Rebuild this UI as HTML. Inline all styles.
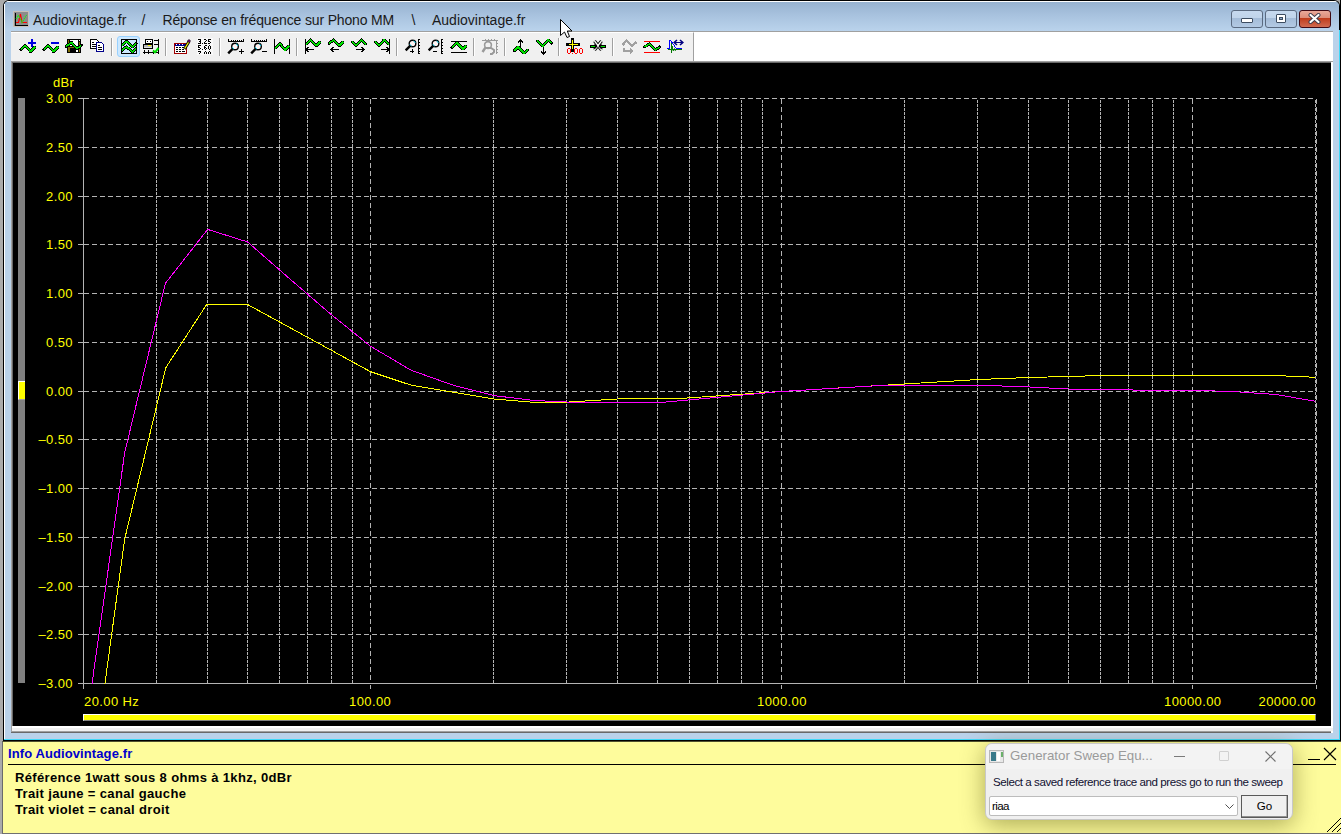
<!DOCTYPE html>
<html><head><meta charset="utf-8">
<style>
*{margin:0;padding:0;box-sizing:border-box}
html,body{width:1341px;height:834px;overflow:hidden;background:#ababab;font-family:"Liberation Sans",sans-serif}
.abs{position:absolute}
#win{position:absolute;left:3px;top:0;width:1337px;height:741px;background:#bad2ea;border:1px solid #000;border-bottom:none;border-radius:6px 6px 0 0}
#title{position:absolute;left:4px;top:1px;width:1335px;height:30px;background:linear-gradient(#fdfdfd 0,#fdfdfd 1px,#97b2d0 1px,#a9c3df 50%,#bad3ec 100%);border-radius:5px 5px 0 0}
.tt{position:absolute;top:12px;font-size:14px;line-height:16px;color:#1a1a1a;white-space:pre}
.tb{position:absolute;top:10px;height:18px;border:1px solid #5a6a80;border-radius:3px;background:linear-gradient(#c6d9ee 0,#c0d4ea 45%,#a4bcd8 46%,#b3c9e3 100%)}
#tbar{position:absolute;left:11px;top:31px;width:1322px;height:30px;background:#fff;border-top:1px solid #a0a0a0}
#tool{position:absolute;left:11px;top:32px;width:683px;height:29px;background:#f0f0f0;border-right:1px solid #a0a0a0;border-top:1px solid #fff}
.sep{position:absolute;top:38px;width:2px;height:18px;background:#a0a0a0;border-right:1px solid #fff}
.ic{position:absolute;top:39px;overflow:visible}
#chart{position:absolute;left:11px;top:61px;width:1322px;height:671px;border-top:1px solid #a0a0a0;border-left:1px solid #a0a0a0;border-right:0;}
#black{position:absolute;left:13px;top:63px;width:1318px;height:663px;background:#000}
.yl{position:absolute;left:20px;width:53px;text-align:right;color:#ffff00;font-size:13px;line-height:16px;letter-spacing:0.4px}
.xl{position:absolute;top:694px;color:#ffff00;font-size:13px;line-height:16px;letter-spacing:0.4px;white-space:nowrap}
#info{position:absolute;left:2px;top:741px;width:1339px;height:93px;background:#fefc9c;border-left:1px solid #6a6a6a;border-top:1px solid #505030}
#infot{position:absolute;left:8px;top:746px;font-size:13px;font-weight:bold;color:#0000cc;letter-spacing:0.1px}
.il{position:absolute;left:15px;font-size:13px;font-weight:bold;color:#000;letter-spacing:0.35px;white-space:nowrap}
#dlg{position:absolute;left:985px;top:743px;width:308px;height:77px;background:#f0f0f0;border:1px solid #c8c8c8;border-radius:7px;box-shadow:0 5px 24px rgba(70,70,0,0.45)}
</style></head><body>
<div id="win"></div>
<div id="title"></div>
<div class="abs" style="left:4px;top:4px;width:1px;height:735px;background:#fff"></div>
<svg class="abs" style="left:13px;top:11px" width="16" height="16" viewBox="0 0 16 16"><rect x="0.5" y="0.5" width="15" height="15" fill="#8c8c8c" stroke="#c8c0b8"/><path d="M2.5 2v12.5h12" stroke="#000" stroke-width="1.2" fill="none" shape-rendering="crispEdges"/><path d="M3 11.5h2.5L7.5 3 9 11.5h5" stroke="#ff0000" stroke-width="1.1" fill="none"/><path d="M3 8L5 4.5 6.5 6 9 11.5 13.5 4" stroke="#00ff00" stroke-width="1.1" stroke-dasharray="1.2 0.8" fill="none"/></svg>
<div class="tt" style="left:33px">Audiovintage.fr</div><div class="tt" style="left:141.5px">/</div><div class="tt" style="left:162.5px;letter-spacing:-0.15px">Réponse en fréquence sur Phono MM</div><div class="tt" style="left:411.5px">\</div><div class="tt" style="left:432px">Audiovintage.fr</div>
<div class="tb" style="left:1231px;width:32px"><div style="position:absolute;left:9px;top:7px;width:12px;height:5px;background:#fff;border:1px solid #3c4c60;border-radius:1px"></div></div>
<div class="tb" style="left:1265px;width:32px"><div style="position:absolute;left:10px;top:3px;width:10px;height:9px;background:#fff;border:1px solid #3c4c60;border-radius:1px"><div style="position:absolute;left:2px;top:2px;width:4px;height:3px;background:#8ea8c8;border:1px solid #3c4c60"></div></div></div>
<div class="tb" style="left:1299px;width:32px;border-color:#3f0a14;background:linear-gradient(#e9a99a 0,#dd8c78 45%,#c03c1c 46%,#d06a50 100%)"><svg style="position:absolute;left:8px;top:2px" width="14" height="12" viewBox="0 0 14 12"><path d="M2.5 2l8 7M10.5 2l-8 7" stroke="#3a3a4a" stroke-width="4" stroke-linecap="round"/><path d="M2.5 2l8 7M10.5 2l-8 7" stroke="#fff" stroke-width="2.2" stroke-linecap="round"/></svg></div>
<div id="tbar"></div>
<div id="tool"></div>
<div class="abs" style="left:117px;top:36px;width:23px;height:21px;background:#cce8ff;border:1px solid #99d1ff;border-radius:3px"></div>
<div class="sep" style="left:111px"></div><div class="sep" style="left:165px"></div><div class="sep" style="left:219px"></div><div class="sep" style="left:296px"></div><div class="sep" style="left:396px"></div><div class="sep" style="left:473px"></div><div class="sep" style="left:504px"></div><div class="sep" style="left:558px"></div><div class="sep" style="left:612px"></div>
<svg class="ic" style="left:20px" width="18" height="18" viewBox="0 0 18 18" shape-rendering="crispEdges"><polyline points="1,10.5 5,6.5 10.5,12.5 15,8" fill="none" stroke="#000" stroke-width="2.9" stroke-linejoin="round" stroke-linecap="round"/><polyline points="1,10.5 5,6.5 10.5,12.5 15,8" fill="none" stroke="#00e000" stroke-width="1.5" stroke-linejoin="round" stroke-linecap="butt"/><path d="M8 3.5h8M12 0v8" stroke="#0000e0" stroke-width="2"/></svg>
<svg class="ic" style="left:43px" width="18" height="18" viewBox="0 0 18 18" shape-rendering="crispEdges"><polyline points="1,10.5 5,6.5 10.5,12.5 15,8" fill="none" stroke="#000" stroke-width="2.9" stroke-linejoin="round" stroke-linecap="round"/><polyline points="1,10.5 5,6.5 10.5,12.5 15,8" fill="none" stroke="#00e000" stroke-width="1.5" stroke-linejoin="round" stroke-linecap="butt"/><path d="M8 3.5h8" stroke="#0000e0" stroke-width="2"/></svg>
<svg class="ic" style="left:66px" width="18" height="18" viewBox="0 0 18 18" shape-rendering="crispEdges"><rect x="1.5" y="0.5" width="13" height="13" fill="#000" stroke="#000"/><rect x="4" y="1" width="8" height="6" fill="#fff"/><rect x="2" y="1" width="1" height="4" fill="#7d6e00"/><rect x="13" y="3" width="1" height="3" fill="#7d6e00"/><rect x="13" y="1" width="1" height="1" fill="#fff"/><rect x="2" y="9" width="2" height="4" fill="#7d6e00"/><rect x="2" y="8" width="6" height="1" fill="#7d6e00"/><rect x="13" y="10" width="1" height="3" fill="#7d6e00"/><rect x="10" y="11" width="2" height="2" fill="#fff"/><polyline points="0,7.5 5.5,3.5 11,9.5 15.5,6.5" fill="none" stroke="#000" stroke-width="2.9" stroke-linejoin="round" stroke-linecap="round"/><polyline points="0,7.5 5.5,3.5 11,9.5 15.5,6.5" fill="none" stroke="#00e000" stroke-width="1.5" stroke-linejoin="round" stroke-linecap="butt"/></svg>
<svg class="ic" style="left:90px" width="18" height="18" viewBox="0 0 18 18" shape-rendering="crispEdges"><path d="M0.5 0.5h6l2 2v7h-8z" fill="#fff" stroke="#000"/><path d="M2 3.5h2M2 5.5h4M2 7.5h4" stroke="#000"/><path d="M6.5 3.5h5l2 2v7h-7z" fill="#fff" stroke="#00008b" stroke-width="1.2"/><path d="M8 6.5h2M8 8.5h4M8 10.5h4" stroke="#000"/></svg>
<svg class="ic" style="left:120px" width="18" height="18" viewBox="0 0 18 18" shape-rendering="crispEdges"><rect x="1.5" y="0.5" width="15" height="14" fill="#cce8ff" stroke="#000" stroke-width="1.3"/><polyline points="2,6 6.5,2.5 12.3,8 16,4.5" fill="none" stroke="#000" stroke-width="2.9" stroke-linejoin="round" stroke-linecap="round"/><polyline points="2,6 6.5,2.5 12.3,8 16,4.5" fill="none" stroke="#00e000" stroke-width="1.5" stroke-linejoin="round" stroke-linecap="butt"/><polyline points="2,11.2 6.5,7.7 12.3,12.8 16,9.5" fill="none" stroke="#000" stroke-width="2.9" stroke-linejoin="round" stroke-linecap="round"/><polyline points="2,11.2 6.5,7.7 12.3,12.8 16,9.5" fill="none" stroke="#00e000" stroke-width="1.5" stroke-linejoin="round" stroke-linecap="butt"/></svg>
<svg class="ic" style="left:143px" width="18" height="18" viewBox="0 0 18 18" shape-rendering="crispEdges"><rect x="2.5" y="0.5" width="7" height="4" rx="1" fill="#fff" stroke="#000"/><path d="M4 2.5h1M7 2.5h1" stroke="#000"/><rect x="0.5" y="5.5" width="9" height="4" rx="1" fill="#b8b8b8" stroke="#000"/><rect x="1" y="8" width="8" height="1" fill="#e0e0e0"/><rect x="5" y="6" width="3" height="1" fill="#ffff00"/><path d="M11 1.5h4M11 5.5h4M15.5 0v15M0 13.5h16M1.5 11v4M5.5 11v4M10.5 11v4" stroke="#000"/><path shape-rendering="auto" d="M10 11.5l2 1.8 3.5-4.3" stroke="#00e000" stroke-width="2" fill="none"/></svg>
<svg class="ic" style="left:174px" width="18" height="18" viewBox="0 0 18 18" shape-rendering="crispEdges"><rect x="0.5" y="4.5" width="12" height="10" fill="#fff" stroke="#a00000"/><rect x="1" y="5" width="11" height="2" fill="#000090"/><path d="M2 5.5h1M5 5.5h1M8 5.5h1" stroke="#fff"/><path d="M2 8.5h2M5 8.5h2M8 8.5h2M2 10.5h2M5 10.5h2M8 10.5h2M2 12.5h2M5 12.5h2M8 12.5h3" stroke="#000"/><path shape-rendering="auto" d="M10.5 10L15 2.5" stroke="#000" stroke-width="3"/><path shape-rendering="auto" d="M10.7 9.5L15 2.5" stroke="#ffff00" stroke-width="1.2"/><circle shape-rendering="auto" cx="15" cy="2" r="1.3" fill="#900090" stroke="#000" stroke-width="0.6"/></svg>
<svg class="ic" style="left:197px" width="18" height="18" viewBox="0 0 18 18" shape-rendering="crispEdges"><rect x="0" y="-1" width="16" height="17" fill="#fff" opacity="0.6"/><g fill="#000"><rect x="1" y="0" width="1" height="1"/><rect x="2" y="0" width="1" height="1"/><rect x="3" y="0" width="1" height="1"/><rect x="3" y="1" width="1" height="1"/><rect x="2" y="2" width="1" height="1"/><rect x="3" y="2" width="1" height="1"/><rect x="3" y="3" width="1" height="1"/><rect x="1" y="4" width="1" height="1"/><rect x="2" y="4" width="1" height="1"/><rect x="3" y="4" width="1" height="1"/><rect x="5" y="4" width="1" height="1"/><rect x="7" y="0" width="1" height="1"/><rect x="8" y="0" width="1" height="1"/><rect x="9" y="1" width="1" height="1"/><rect x="8" y="2" width="1" height="1"/><rect x="7" y="3" width="1" height="1"/><rect x="7" y="4" width="1" height="1"/><rect x="8" y="4" width="1" height="1"/><rect x="9" y="4" width="1" height="1"/><rect x="11" y="0" width="1" height="1"/><rect x="12" y="0" width="1" height="1"/><rect x="13" y="0" width="1" height="1"/><rect x="11" y="1" width="1" height="1"/><rect x="11" y="2" width="1" height="1"/><rect x="12" y="2" width="1" height="1"/><rect x="13" y="3" width="1" height="1"/><rect x="11" y="4" width="1" height="1"/><rect x="12" y="4" width="1" height="1"/><rect x="1" y="6" width="1" height="1"/><rect x="2" y="6" width="1" height="1"/><rect x="3" y="6" width="1" height="1"/><rect x="1" y="7" width="1" height="1"/><rect x="1" y="8" width="1" height="1"/><rect x="2" y="8" width="1" height="1"/><rect x="3" y="9" width="1" height="1"/><rect x="1" y="10" width="1" height="1"/><rect x="2" y="10" width="1" height="1"/><rect x="5" y="10" width="1" height="1"/><rect x="8" y="6" width="1" height="1"/><rect x="9" y="6" width="1" height="1"/><rect x="7" y="7" width="1" height="1"/><rect x="7" y="8" width="1" height="1"/><rect x="8" y="8" width="1" height="1"/><rect x="7" y="9" width="1" height="1"/><rect x="9" y="9" width="1" height="1"/><rect x="8" y="10" width="1" height="1"/><rect x="12" y="6" width="1" height="1"/><rect x="11" y="7" width="1" height="1"/><rect x="13" y="7" width="1" height="1"/><rect x="11" y="8" width="1" height="1"/><rect x="13" y="8" width="1" height="1"/><rect x="11" y="9" width="1" height="1"/><rect x="13" y="9" width="1" height="1"/><rect x="12" y="10" width="1" height="1"/><rect x="1" y="12" width="1" height="1"/><rect x="2" y="12" width="1" height="1"/><rect x="3" y="12" width="1" height="1"/><rect x="3" y="13" width="1" height="1"/><rect x="2" y="14" width="1" height="1"/><rect x="8" y="12" width="1" height="1"/><rect x="7" y="13" width="1" height="1"/><rect x="9" y="13" width="1" height="1"/><rect x="7" y="14" width="1" height="1"/><rect x="9" y="14" width="1" height="1"/><rect x="12" y="12" width="1" height="1"/><rect x="11" y="13" width="1" height="1"/><rect x="13" y="13" width="1" height="1"/><rect x="11" y="14" width="1" height="1"/><rect x="13" y="14" width="1" height="1"/></g></svg>
<svg class="ic" style="left:228px" width="18" height="18" viewBox="0 0 18 18" shape-rendering="crispEdges"><path d="M0.5 0v2.5h15V0M3 1v1M5 1v1M7 1v1M9 1v1M11 1v1M13 1v1" stroke="#000" fill="none"/><circle shape-rendering="auto" cx="7" cy="7.5" r="3.3" fill="#fff4f4" stroke="#000" stroke-width="1.4"/><path shape-rendering="auto" d="M4.4 10.1l-4.2 4.2" stroke="#000" stroke-width="2.4"/><path shape-rendering="auto" d="M8.2 4.9a3 3 0 0 1 1.6 2" stroke="#00e0ff" stroke-width="1" fill="none"/><path shape-rendering="auto" d="M4.4 8.3a3 3 0 0 0 1.6 1.8" stroke="#00e0ff" stroke-width="1" fill="none"/><path d="M11 12.5h5M13.5 10v5" stroke="#000"/></svg>
<svg class="ic" style="left:251px" width="18" height="18" viewBox="0 0 18 18" shape-rendering="crispEdges"><path d="M0.5 0v2.5h15V0M3 1v1M5 1v1M7 1v1M9 1v1M11 1v1M13 1v1" stroke="#000" fill="none"/><circle shape-rendering="auto" cx="7" cy="7.5" r="3.3" fill="#fff4f4" stroke="#000" stroke-width="1.4"/><path shape-rendering="auto" d="M4.4 10.1l-4.2 4.2" stroke="#000" stroke-width="2.4"/><path shape-rendering="auto" d="M8.2 4.9a3 3 0 0 1 1.6 2" stroke="#00e0ff" stroke-width="1" fill="none"/><path shape-rendering="auto" d="M4.4 8.3a3 3 0 0 0 1.6 1.8" stroke="#00e0ff" stroke-width="1" fill="none"/><path d="M11 12.5h5" stroke="#000"/></svg>
<svg class="ic" style="left:274px" width="18" height="18" viewBox="0 0 18 18" shape-rendering="crispEdges"><path d="M0.5 0v15M15.5 0v15" stroke="#000"/><polyline points="1,9 6,4.5 11,11 15,7" fill="none" stroke="#000" stroke-width="2.9" stroke-linejoin="round" stroke-linecap="round"/><polyline points="1,9 6,4.5 11,11 15,7" fill="none" stroke="#00e000" stroke-width="1.5" stroke-linejoin="round" stroke-linecap="butt"/></svg>
<svg class="ic" style="left:305px" width="18" height="18" viewBox="0 0 18 18" shape-rendering="crispEdges"><path d="M0.5 0v15" stroke="#000"/><polyline points="1,5 5.5,1 11.5,6.5 15,3" fill="none" stroke="#000" stroke-width="2.9" stroke-linejoin="round" stroke-linecap="round"/><polyline points="1,5 5.5,1 11.5,6.5 15,3" fill="none" stroke="#00e000" stroke-width="1.5" stroke-linejoin="round" stroke-linecap="butt"/><path d="M1 10.5h8M3.5 8.0l-2.5 2.5 2.5 2.5" stroke="#000" stroke-width="1.6" fill="none"/></svg>
<svg class="ic" style="left:328px" width="18" height="18" viewBox="0 0 18 18" shape-rendering="crispEdges"><polyline points="1,4.5 5.5,1 11.5,6.5 15,3" fill="none" stroke="#000" stroke-width="2.9" stroke-linejoin="round" stroke-linecap="round"/><polyline points="1,4.5 5.5,1 11.5,6.5 15,3" fill="none" stroke="#00e000" stroke-width="1.5" stroke-linejoin="round" stroke-linecap="butt"/><path d="M3 10.5h8M5.5 8.0l-2.5 2.5 2.5 2.5" stroke="#000" stroke-width="1.6" fill="none"/></svg>
<svg class="ic" style="left:351px" width="18" height="18" viewBox="0 0 18 18" shape-rendering="crispEdges"><polyline points="1,3 5,6.5 10.5,1 15,5" fill="none" stroke="#000" stroke-width="2.9" stroke-linejoin="round" stroke-linecap="round"/><polyline points="1,3 5,6.5 10.5,1 15,5" fill="none" stroke="#00e000" stroke-width="1.5" stroke-linejoin="round" stroke-linecap="butt"/><path d="M5 10.5h8M10.5 8.0l2.5 2.5-2.5 2.5" stroke="#000" stroke-width="1.6" fill="none"/></svg>
<svg class="ic" style="left:374px" width="18" height="18" viewBox="0 0 18 18" shape-rendering="crispEdges"><path d="M15.5 0v15" stroke="#000"/><polyline points="1,3 5,6.5 10,1 15,5" fill="none" stroke="#000" stroke-width="2.9" stroke-linejoin="round" stroke-linecap="round"/><polyline points="1,3 5,6.5 10,1 15,5" fill="none" stroke="#00e000" stroke-width="1.5" stroke-linejoin="round" stroke-linecap="butt"/><path d="M7 10.5h8M12.5 8.0l2.5 2.5-2.5 2.5" stroke="#000" stroke-width="1.6" fill="none"/></svg>
<svg class="ic" style="left:405px" width="18" height="18" viewBox="0 0 18 18" shape-rendering="crispEdges"><circle shape-rendering="auto" cx="7.5" cy="4.5" r="3.3" fill="#fff4f4" stroke="#000" stroke-width="1.4"/><path shape-rendering="auto" d="M4.9 7.1l-4.2 4.2" stroke="#000" stroke-width="2.4"/><path shape-rendering="auto" d="M8.7 1.9a3 3 0 0 1 1.6 2" stroke="#00e0ff" stroke-width="1" fill="none"/><path shape-rendering="auto" d="M4.9 5.3a3 3 0 0 0 1.6 1.8" stroke="#00e0ff" stroke-width="1" fill="none"/><path d="M5 12h4M7 10v4" stroke="#000"/><path d="M13.5 0v15M13 0.5h2M13 14.5h2M14 3h1M14 6h1M14 9h1M14 12h1" stroke="#000" fill="none"/></svg>
<svg class="ic" style="left:428px" width="18" height="18" viewBox="0 0 18 18" shape-rendering="crispEdges"><circle shape-rendering="auto" cx="7.5" cy="4.5" r="3.3" fill="#fff4f4" stroke="#000" stroke-width="1.4"/><path shape-rendering="auto" d="M4.9 7.1l-4.2 4.2" stroke="#000" stroke-width="2.4"/><path shape-rendering="auto" d="M8.7 1.9a3 3 0 0 1 1.6 2" stroke="#00e0ff" stroke-width="1" fill="none"/><path shape-rendering="auto" d="M4.9 5.3a3 3 0 0 0 1.6 1.8" stroke="#00e0ff" stroke-width="1" fill="none"/><path d="M5 12h4" stroke="#000"/><path d="M13.5 0v15M13 0.5h2M13 14.5h2M14 3h1M14 6h1M14 9h1M14 12h1" stroke="#000" fill="none"/></svg>
<svg class="ic" style="left:451px" width="18" height="18" viewBox="0 0 18 18" shape-rendering="crispEdges"><path d="M0 2.5h16M0 13.5h16" stroke="#000"/><polyline points="1,8.5 6,4 12,10 15,7" fill="none" stroke="#000" stroke-width="2.9" stroke-linejoin="round" stroke-linecap="round"/><polyline points="1,8.5 6,4 12,10 15,7" fill="none" stroke="#00e000" stroke-width="1.5" stroke-linejoin="round" stroke-linecap="butt"/></svg>
<svg class="ic" style="left:482px" width="18" height="18" viewBox="0 0 18 18" shape-rendering="crispEdges"><g stroke="#9a9a9a" fill="none"><path d="M0 1.5h16M14.5 1v14M3 0v1M6 0v1M9 0v1M12 0v1M15 4.5h1M15 7.5h1M15 10.5h1M15 13.5h1"/><circle shape-rendering="auto" cx="6" cy="6" r="3.4" stroke-width="1.6"/><path shape-rendering="auto" d="M3.5 8.5L0.5 13" stroke-width="2.4"/><path shape-rendering="auto" d="M3 9h6l3 2v2l-2 2h-2" stroke-width="2"/></g></svg>
<svg class="ic" style="left:513px" width="18" height="18" viewBox="0 0 18 18" shape-rendering="crispEdges"><polyline points="1,12 5,8 11,14 15,11" fill="none" stroke="#000" stroke-width="2.9" stroke-linejoin="round" stroke-linecap="round"/><polyline points="1,12 5,8 11,14 15,11" fill="none" stroke="#00e000" stroke-width="1.5" stroke-linejoin="round" stroke-linecap="butt"/><path d="M7.5 8V1M5 3.5l2.5-2.5 2.5 2.5" stroke="#000" stroke-width="1.6" fill="none"/></svg>
<svg class="ic" style="left:536px" width="18" height="18" viewBox="0 0 18 18" shape-rendering="crispEdges"><polyline points="1,2 7,7 12,1 15.5,4" fill="none" stroke="#000" stroke-width="2.9" stroke-linejoin="round" stroke-linecap="round"/><polyline points="1,2 7,7 12,1 15.5,4" fill="none" stroke="#00e000" stroke-width="1.5" stroke-linejoin="round" stroke-linecap="butt"/><path d="M7.5 8v7M5 12.5l2.5 2.5 2.5-2.5" stroke="#000" stroke-width="1.6" fill="none"/></svg>
<svg class="ic" style="left:567px" width="18" height="18" viewBox="0 0 18 18" shape-rendering="crispEdges"><path d="M5.5 0v11M0.5 5.5h11" stroke="#000" stroke-width="3" stroke-linecap="square"/><path d="M5.5 1v9M1.5 5.5h9" stroke="#ffff00" stroke-width="1"/><g fill="#ff0000"><path d="M0 10h1v4H0zM3 10h1v4H3zM1 9h2v1H1zM1 14h2v1H1zM7 10h1v4H7zM10 10h1v4h-1zM8 9h2v1H8zM8 14h2v1H8zM12 10h1v4h-1zM15 10h1v4h-1zM13 9h2v1h-2zM13 14h2v1h-2zM5 14h1v1H5z"/></g></svg>
<svg class="ic" style="left:590px" width="18" height="18" viewBox="0 0 18 18" shape-rendering="crispEdges"><path shape-rendering="auto" d="M4.5 2l7 9M11.5 2l-7 9" stroke="#000" stroke-width="3.2"/><path shape-rendering="auto" d="M4.5 2l7 9M11.5 2l-7 9" stroke="#fff" stroke-width="1.3"/><path d="M0 7.5h5.5M10.5 7.5h5.5" stroke="#000" stroke-width="3"/><path d="M1 7.5h4M11 7.5h4" stroke="#00e000" stroke-width="1"/><path shape-rendering="auto" d="M4.5 5.5l2 2-2 2M11.5 5.5l-2 2 2 2" stroke="#000" stroke-width="1.4" fill="none"/></svg>
<svg class="ic" style="left:621px" width="18" height="18" viewBox="0 0 18 18" shape-rendering="crispEdges"><polyline points="1.5,6 5.5,1.5 11,7 15.5,3" fill="none" stroke="#a0a0a0" stroke-width="2.4"/><path d="M3 9v3h8M9 10l2.5 2-2.5 2" stroke="#a0a0a0" stroke-width="2" fill="none"/></svg>
<svg class="ic" style="left:644px" width="18" height="18" viewBox="0 0 18 18" shape-rendering="crispEdges"><path d="M0 2.5h16M0 13.5h16" stroke="#ff0000" stroke-width="1"/><polyline points="0.5,8 5.5,4.8 11.5,11 15.5,8" fill="none" stroke="#000" stroke-width="2.9" stroke-linejoin="round" stroke-linecap="round"/><polyline points="0.5,8 5.5,4.8 11.5,11 15.5,8" fill="none" stroke="#00e000" stroke-width="1.5" stroke-linejoin="round" stroke-linecap="butt"/></svg>
<svg class="ic" style="left:667px" width="18" height="18" viewBox="0 0 18 18" shape-rendering="crispEdges"><path d="M1 10.5H15M4.5 4v9.5M5.5 7v4" stroke="#007800" stroke-width="1" fill="none"/><path shape-rendering="auto" d="M5.5 10.5l1 1.5 1-2.5 1 2 1-1.5" stroke="#007800" stroke-width="1" fill="none"/><path d="M0 9.5h2.5V1.5h1" stroke="#0000ff" stroke-width="1.4" fill="none"/><path d="M3.8 2L9 9" stroke="#0000ff" stroke-width="1" fill="none"/><path d="M9 9.5h6" stroke="#0000ff" stroke-width="1.3" fill="none"/><path d="M7.5 3.5H15.5" stroke="#000080" stroke-width="1.6" fill="none"/><path shape-rendering="auto" d="M10 1L7.2 3.5 10 6M13 1l2.8 2.5L13 6" stroke="#000080" stroke-width="1.6" fill="none"/></svg>
<div class="abs" style="left:11px;top:61px;width:1322px;height:1px;background:#a0a0a0"></div>
<div class="abs" style="left:11px;top:61px;width:1px;height:671px;background:#a0a0a0"></div>
<div class="abs" style="left:12px;top:62px;width:1320px;height:1px;background:#696969"></div>
<div class="abs" style="left:12px;top:62px;width:1px;height:664px;background:#696969"></div>
<div id="black"></div>
<div class="abs" style="left:1331px;top:62px;width:2px;height:671px;background:#fff"></div>
<div class="abs" style="left:12px;top:726px;width:1321px;height:2px;background:#fff"></div>
<div class="abs" style="left:12px;top:728px;width:1321px;height:3px;background:#f0f0f0"></div>
<div class="abs" style="left:11px;top:731px;width:1320px;height:1px;background:#a0a0a0"></div><div class="abs" style="left:11px;top:732px;width:1320px;height:1px;background:#696969"></div>
<div class="abs" style="left:4px;top:739px;width:1336px;height:1px;background:#40d8f8"></div>
<div class="abs" style="left:1339px;top:30px;width:1px;height:710px;background:#40d8f8"></div>
<div class="abs" style="left:4px;top:740px;width:1337px;height:1px;background:#000"></div>
<div class="abs" style="left:1340px;top:0;width:1px;height:741px;background:#000"></div>
<div class="abs" style="left:18px;top:98px;width:7px;height:585px;background:#808080"></div>
<div class="abs" style="left:18px;top:381px;width:7px;height:19px;background:#ffff00;border-left:1px solid #fff;border-top:1px solid #fff;border-bottom:1px solid #a0a0a0"></div>
<div class="abs" style="left:53px;top:75px;color:#ffff00;font-size:13px;letter-spacing:0.3px">dBr</div>
<div class="yl" style="top:91px">3.00</div>
<div class="yl" style="top:140px">2.50</div>
<div class="yl" style="top:189px">2.00</div>
<div class="yl" style="top:237px">1.50</div>
<div class="yl" style="top:286px">1.00</div>
<div class="yl" style="top:335px">0.50</div>
<div class="yl" style="top:384px">0.00</div>
<div class="yl" style="top:432px">&#8211;0.50</div>
<div class="yl" style="top:481px">&#8211;1.00</div>
<div class="yl" style="top:530px">&#8211;1.50</div>
<div class="yl" style="top:579px">&#8211;2.00</div>
<div class="yl" style="top:627px">&#8211;2.50</div>
<div class="yl" style="top:676px">&#8211;3.00</div>
<div class="xl" style="left:84px">20.00 Hz</div>
<div class="xl" style="left:349px">100.00</div>
<div class="xl" style="left:757px">1000.00</div>
<div class="xl" style="left:1164px">10000.00</div>
<div class="xl" style="right:25px">20000.00</div>
<div class="abs" style="left:83px;top:714px;width:1233px;height:7px;background:#ffff00;border-top:1px solid #fff;border-left:1px solid #fff;border-bottom:1px solid #808080;border-right:1px solid #808080"></div>
<svg class="abs" style="left:0;top:0" width="1341" height="834" shape-rendering="crispEdges">
<defs><clipPath id="plot"><rect x="84" y="98" width="1232" height="586"/></clipPath></defs>
<line x1="84" y1="98.5" x2="1316" y2="98.5" stroke="#b4b4b4" stroke-dasharray="5 3"/>
<line x1="84" y1="147.5" x2="1316" y2="147.5" stroke="#b4b4b4" stroke-dasharray="5 3"/>
<line x1="84" y1="196.5" x2="1316" y2="196.5" stroke="#b4b4b4" stroke-dasharray="5 3"/>
<line x1="84" y1="244.5" x2="1316" y2="244.5" stroke="#b4b4b4" stroke-dasharray="5 3"/>
<line x1="84" y1="293.5" x2="1316" y2="293.5" stroke="#b4b4b4" stroke-dasharray="5 3"/>
<line x1="84" y1="342.5" x2="1316" y2="342.5" stroke="#b4b4b4" stroke-dasharray="5 3"/>
<line x1="84" y1="391.5" x2="1316" y2="391.5" stroke="#b4b4b4" stroke-dasharray="5 3"/>
<line x1="84" y1="439.5" x2="1316" y2="439.5" stroke="#b4b4b4" stroke-dasharray="5 3"/>
<line x1="84" y1="488.5" x2="1316" y2="488.5" stroke="#b4b4b4" stroke-dasharray="5 3"/>
<line x1="84" y1="537.5" x2="1316" y2="537.5" stroke="#b4b4b4" stroke-dasharray="5 3"/>
<line x1="84" y1="586.5" x2="1316" y2="586.5" stroke="#b4b4b4" stroke-dasharray="5 3"/>
<line x1="84" y1="634.5" x2="1316" y2="634.5" stroke="#b4b4b4" stroke-dasharray="5 3"/>
<line x1="78" y1="98.5" x2="83" y2="98.5" stroke="#b4b4b4"/>
<line x1="78" y1="147.5" x2="83" y2="147.5" stroke="#b4b4b4"/>
<line x1="78" y1="196.5" x2="83" y2="196.5" stroke="#b4b4b4"/>
<line x1="78" y1="244.5" x2="83" y2="244.5" stroke="#b4b4b4"/>
<line x1="78" y1="293.5" x2="83" y2="293.5" stroke="#b4b4b4"/>
<line x1="78" y1="342.5" x2="83" y2="342.5" stroke="#b4b4b4"/>
<line x1="78" y1="391.5" x2="83" y2="391.5" stroke="#b4b4b4"/>
<line x1="78" y1="439.5" x2="83" y2="439.5" stroke="#b4b4b4"/>
<line x1="78" y1="488.5" x2="83" y2="488.5" stroke="#b4b4b4"/>
<line x1="78" y1="537.5" x2="83" y2="537.5" stroke="#b4b4b4"/>
<line x1="78" y1="586.5" x2="83" y2="586.5" stroke="#b4b4b4"/>
<line x1="78" y1="634.5" x2="83" y2="634.5" stroke="#b4b4b4"/>
<line x1="78" y1="683.5" x2="83" y2="683.5" stroke="#b4b4b4"/>
<line x1="156.5" y1="100" x2="156.5" y2="683" stroke="#b4b4b4" stroke-dasharray="3 1"/>
<line x1="207.5" y1="100" x2="207.5" y2="683" stroke="#b4b4b4" stroke-dasharray="3 1"/>
<line x1="247.5" y1="100" x2="247.5" y2="683" stroke="#b4b4b4" stroke-dasharray="3 1"/>
<line x1="279.5" y1="100" x2="279.5" y2="683" stroke="#b4b4b4" stroke-dasharray="3 1"/>
<line x1="307.5" y1="100" x2="307.5" y2="683" stroke="#b4b4b4" stroke-dasharray="3 1"/>
<line x1="331.5" y1="100" x2="331.5" y2="683" stroke="#b4b4b4" stroke-dasharray="3 1"/>
<line x1="352.5" y1="100" x2="352.5" y2="683" stroke="#b4b4b4" stroke-dasharray="3 1"/>
<line x1="493.5" y1="100" x2="493.5" y2="683" stroke="#b4b4b4" stroke-dasharray="3 1"/>
<line x1="566.5" y1="100" x2="566.5" y2="683" stroke="#b4b4b4" stroke-dasharray="3 1"/>
<line x1="617.5" y1="100" x2="617.5" y2="683" stroke="#b4b4b4" stroke-dasharray="3 1"/>
<line x1="657.5" y1="100" x2="657.5" y2="683" stroke="#b4b4b4" stroke-dasharray="3 1"/>
<line x1="689.5" y1="100" x2="689.5" y2="683" stroke="#b4b4b4" stroke-dasharray="3 1"/>
<line x1="717.5" y1="100" x2="717.5" y2="683" stroke="#b4b4b4" stroke-dasharray="3 1"/>
<line x1="741.5" y1="100" x2="741.5" y2="683" stroke="#b4b4b4" stroke-dasharray="3 1"/>
<line x1="762.5" y1="100" x2="762.5" y2="683" stroke="#b4b4b4" stroke-dasharray="3 1"/>
<line x1="904.5" y1="100" x2="904.5" y2="683" stroke="#b4b4b4" stroke-dasharray="3 1"/>
<line x1="977.5" y1="100" x2="977.5" y2="683" stroke="#b4b4b4" stroke-dasharray="3 1"/>
<line x1="1028.5" y1="100" x2="1028.5" y2="683" stroke="#b4b4b4" stroke-dasharray="3 1"/>
<line x1="1068.5" y1="100" x2="1068.5" y2="683" stroke="#b4b4b4" stroke-dasharray="3 1"/>
<line x1="1100.5" y1="100" x2="1100.5" y2="683" stroke="#b4b4b4" stroke-dasharray="3 1"/>
<line x1="1128.5" y1="100" x2="1128.5" y2="683" stroke="#b4b4b4" stroke-dasharray="3 1"/>
<line x1="1152.5" y1="100" x2="1152.5" y2="683" stroke="#b4b4b4" stroke-dasharray="3 1"/>
<line x1="1173.5" y1="100" x2="1173.5" y2="683" stroke="#b4b4b4" stroke-dasharray="3 1"/>
<line x1="1315.5" y1="100" x2="1315.5" y2="683" stroke="#b4b4b4" stroke-dasharray="3 1"/>
<line x1="370.5" y1="99" x2="370.5" y2="683" stroke="#b4b4b4" stroke-dasharray="5 3"/>
<line x1="370.5" y1="685" x2="370.5" y2="689" stroke="#b4b4b4"/>
<line x1="781.5" y1="99" x2="781.5" y2="683" stroke="#b4b4b4" stroke-dasharray="5 3"/>
<line x1="781.5" y1="685" x2="781.5" y2="689" stroke="#b4b4b4"/>
<line x1="1192.5" y1="99" x2="1192.5" y2="683" stroke="#b4b4b4" stroke-dasharray="5 3"/>
<line x1="1192.5" y1="685" x2="1192.5" y2="689" stroke="#b4b4b4"/>
<line x1="1316.5" y1="99" x2="1316.5" y2="683" stroke="#b4b4b4" stroke-dasharray="5 3"/>
<line x1="1316.5" y1="685" x2="1316.5" y2="689" stroke="#b4b4b4"/>
<line x1="83.5" y1="684" x2="83.5" y2="689" stroke="#b4b4b4"/>
<line x1="83.5" y1="98" x2="83.5" y2="684" stroke="#b4b4b4"/>
<line x1="78" y1="683.5" x2="1316" y2="683.5" stroke="#b4b4b4"/>
<g clip-path="url(#plot)" fill="none" stroke-width="1">
<polyline points="83.4,841.0 124.7,539.0 165.8,367.7 206.9,304.1 246.8,304.1 370.5,371.7 411.5,385.3 494.0,399.0 535.0,402.4 566.0,402.2 617.7,399.0 680.0,398.5 781.0,391.5 904.0,384.0 977.0,379.6 1028.0,377.5 1068.0,376.5 1110.0,375.3 1192.0,375.3 1274.0,375.5 1315.5,377.3" stroke="#ffff00"/>
<polyline points="83.4,744.5 124.7,452.6 165.4,283.4 207.6,229.4 247.5,241.9 288.2,277.5 330.6,314.0 370.5,346.2 411.2,370.3 454.3,385.6 494.0,395.6 534.0,400.5 575.0,402.4 617.7,402.5 657.5,402.8 781.0,391.5 880.0,385.5 987.0,385.5 1028.0,386.9 1068.0,389.0 1152.0,390.3 1192.0,390.3 1232.0,391.5 1276.0,394.5 1315.5,401.3" stroke="#ff00ff"/>
</g>
</svg>
<!-- cursor -->
<svg class="abs" style="left:0;top:0" width="1341" height="60"><path d="M560.5 19.5V35.5L564.5 32L567 37.5L569.5 36.5L567.3 31H572Z" fill="#fff" stroke="#000" stroke-width="1" stroke-linejoin="round"/></svg>
<div id="info"></div>
<div id="infot">Info Audiovintage.fr</div>
<div class="abs" style="left:8px;top:764px;width:1328px;height:1px;background:#000"></div>
<div class="il" style="top:770px">Référence 1watt sous 8 ohms à 1khz, 0dBr</div>
<div class="il" style="top:786px">Trait jaune = canal gauche</div>
<div class="il" style="top:802px">Trait violet = canal droit</div>
<div class="abs" style="left:1308px;top:759px;width:12px;height:1px;background:#000"></div>
<svg class="abs" style="left:1323px;top:747px" width="14" height="14"><path d="M1 1l12 12M13 1L1 13" stroke="#000" stroke-width="1.15"/></svg>
<svg class="abs" style="left:1324px;top:816px" width="17" height="17" shape-rendering="crispEdges"><path d="M17.5 1.5L2.5 16.5M17.5 6.5L7.5 16.5M17.5 11.5L12.5 16.5" stroke="#000" stroke-width="1.2"/></svg>
<div class="abs" style="left:2px;top:833px;width:1339px;height:1px;background:#707070"></div>
<div id="dlg">
 <div style="position:absolute;left:0;top:0;width:306px;height:25px;background:#f3f3f3;border-radius:7px 7px 0 0"></div>
 <svg style="position:absolute;left:3px;top:6px" width="15" height="13"><rect x="0.5" y="0.5" width="14" height="12" fill="#e8e8e8" stroke="#b8b8b8"/><rect x="2" y="2" width="5" height="9" fill="#3a7a8a"/><rect x="8" y="2" width="3" height="9" fill="#ffffff"/><rect x="12" y="2" width="2" height="5" fill="#6ab06a"/></svg>
 <div style="position:absolute;left:24px;top:4px;font-size:13.3px;color:#9a9a9a;white-space:nowrap">Generator Sweep Equ...</div>
 <div style="position:absolute;left:188px;top:12px;width:11px;height:1px;background:#7a7a7a"></div>
 <div style="position:absolute;left:233px;top:7px;width:10px;height:10px;border:1px solid #d0d0d0;border-radius:1px"></div>
 <svg style="position:absolute;left:279px;top:7px" width="11" height="11"><path d="M0.5 0.5l10 10M10.5 0.5l-10 10" stroke="#707070" stroke-width="1.1"/></svg>
 <div style="position:absolute;left:7px;top:31px;font-size:11.6px;color:#101030;white-space:nowrap;letter-spacing:-0.45px">Select a saved reference trace and press go to run the sweep</div>
 <div style="position:absolute;left:3px;top:52px;width:249px;height:20px;background:#fff;border:1px solid #bcbcbc;border-radius:2px"></div>
 <div style="position:absolute;left:6px;top:55px;font-size:11.6px;color:#000;letter-spacing:-0.6px">riaa</div>
 <svg style="position:absolute;left:239px;top:60px" width="9" height="6"><path d="M0.5 0.5l4 4 4-4" stroke="#505050" fill="none"/></svg>
 <div style="position:absolute;left:255px;top:51px;width:47px;height:23px;background:#f0f0f0;border:1px solid #5a5a5a;box-shadow:inset 0 -1px 0 #909090,inset -1px 0 0 #b0b0b0"></div>
 <div style="position:absolute;left:255px;top:55px;width:47px;text-align:center;font-size:11.6px;color:#000">Go</div>
</div>
</body></html>
